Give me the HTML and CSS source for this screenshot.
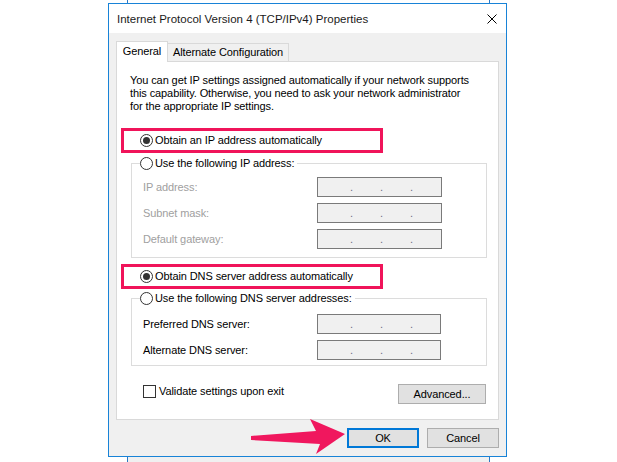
FILE: index.html
```html
<!DOCTYPE html>
<html>
<head>
<meta charset="utf-8">
<title>Internet Protocol Version 4 (TCP/IPv4) Properties</title>
<link rel="stylesheet" href="styles.css">
</head>
<body>
<div class="backwin"></div>
<div class="dialog">
  <div class="titlebar">
    <span class="title">Internet Protocol Version 4 (TCP/IPv4) Properties</span>
    <svg class="close" width="10" height="10" viewBox="0 0 10 10"><path d="M0.5 0.5L9.5 9.5M9.5 0.5L0.5 9.5" stroke="#000" stroke-width="1" fill="none"/></svg>
  </div>
  <div class="body">
    <div class="tabs">
      <div class="tab active">General</div>
      <div class="tab">Alternate Configuration</div>
    </div>
    <div class="panel">
      <p class="desc">You can get IP settings assigned automatically if your network supports<br>this capability. Otherwise, you need to ask your network administrator<br>for the appropriate IP settings.</p>
      <div class="highlight hl-first">
        <div class="radio-row"><span class="radio checked"></span><span class="rtext">Obtain an IP address automatically</span></div>
      </div>
      <fieldset class="group group-ip">
        <legend><span class="radio"></span><span class="rtext">Use the following IP address:</span></legend>
        <div class="fields">
          <span class="flabel disabled">IP address:</span>
          <span class="ipbox"><i>.</i><i>.</i><i>.</i></span>
          <span class="flabel disabled">Subnet mask:</span>
          <span class="ipbox"><i>.</i><i>.</i><i>.</i></span>
          <span class="flabel disabled">Default gateway:</span>
          <span class="ipbox"><i>.</i><i>.</i><i>.</i></span>
        </div>
      </fieldset>
      <div class="highlight hl-second">
        <div class="radio-row"><span class="radio checked"></span><span class="rtext">Obtain DNS server address automatically</span></div>
      </div>
      <fieldset class="group group-dns">
        <legend><span class="radio"></span><span class="rtext">Use the following DNS server addresses:</span></legend>
        <div class="fields">
          <span class="flabel">Preferred DNS server:</span>
          <span class="ipbox"><i>.</i><i>.</i><i>.</i></span>
          <span class="flabel">Alternate DNS server:</span>
          <span class="ipbox"><i>.</i><i>.</i><i>.</i></span>
        </div>
      </fieldset>
      <div class="bottom-row">
        <div class="check-row"><span class="checkbox"></span><span class="ctext">Validate settings upon exit</span></div>
        <div class="btn btn-adv">Advanced...</div>
      </div>
    </div>
    <div class="footer">
      <div class="btn btn-default">OK</div>
      <div class="btn">Cancel</div>
    </div>
  </div>
</div>
<svg class="arrow" width="617" height="462" viewBox="0 0 617 462">
  <polygon points="251,436 316,431 310,419 345,434 316,454 320,444 251,440" fill="#f0175e"/>
</svg>
</body>
</html>
```

FILE: styles.css
```css
* {
  box-sizing: border-box;
}

html,
body {
  margin: 0;
  padding: 0;
}

body {
  width: 617px;
  height: 462px;
  overflow: hidden;
  position: relative;
  background: #ffffff;
  font-family: "Liberation Sans", Arial, sans-serif;
  font-size: 11px;
  letter-spacing: -0.1px;
  line-height: 13px;
  color: #000000;
  white-space: nowrap;
}

.backwin {
  position: absolute;
  left: 127px;
  top: 0;
  width: 363px;
  height: 462px;
  border-left: 1px solid #2b78c5;
  border-right: 1px solid #2b78c5;
  background: linear-gradient(#ffffff 0 440px, #f0f0f0 440px);
}

.dialog {
  position: absolute;
  left: 108px;
  top: 3px;
  width: 399px;
  height: 454px;
  border: 1px solid #1883d7;
  background: #f0f0f0;
  display: flex;
  flex-direction: column;
}

.titlebar {
  flex: none;
  height: 29px;
  background: #ffffff;
  display: flex;
  align-items: center;
  justify-content: space-between;
  padding: 1px 9px 0 8px;
}

.title {
  font-size: 11.5px;
  letter-spacing: 0;
  color: #1a1a1a;
}

.close {
  display: block;
}

.body {
  padding: 8px 7px 0;
}

.tabs {
  display: flex;
  align-items: flex-end;
  height: 20px;
  position: relative;
  z-index: 1;
}

.tab {
  height: 18px;
  width: 121px;
  border: 1px solid #d9d9d9;
  border-left: none;
  border-bottom: none;
  background: #f0f0f0;
  text-align: center;
  line-height: 17px;
}

.tab.active {
  width: 52px;
  height: 21px;
  margin-bottom: -1px;
  border-left: 1px solid #d9d9d9;
  background: #ffffff;
  line-height: 19px;
}

.panel {
  height: 359px;
  background: #ffffff;
  border: 1px solid #d9d9d9;
  padding: 12px 11px 0 13px;
}

.desc {
  margin: 0;
  line-height: 13px;
}

.highlight {
  width: 262px;
  height: 25px;
  margin-left: -9px;
  border: 3px solid #f0145a;
}

.hl-first {
  margin-top: 15px;
}

.hl-second {
  margin-top: 6px;
}

.radio-row {
  height: 19px;
  display: flex;
  align-items: center;
  padding-left: 16px;
}

.radio {
  flex: none;
  width: 13px;
  height: 13px;
  border: 1px solid #333333;
  border-radius: 50%;
  background: #ffffff;
  display: flex;
  align-items: center;
  justify-content: center;
}

.radio.checked::after {
  content: "";
  width: 7px;
  height: 7px;
  border-radius: 50%;
  background: #333333;
}

.rtext {
  margin-left: 2px;
}

.group {
  margin: 4px 0 0 1px;
  padding: 7px 0 8px 8px;
  border: 1px solid #dcdcdc;
  min-width: 0;
}

.group-dns {
  margin-top: 3px;
  padding-top: 9px;
  padding-bottom: 5px;
}

.group legend {
  display: flex;
  align-items: center;
  height: 13px;
  padding: 0 3px 0 0;
}

.fields {
  display: grid;
  grid-template-columns: 174px 125px;
  row-gap: 6px;
  align-items: center;
  margin-left: 3px;
}

.group-dns .fields {
  grid-template-columns: 174px 124px;
}

.flabel.disabled {
  color: #a0a0a0;
}

.ipbox {
  height: 20px;
  border: 1px solid #7a7a7a;
  background: #f0f0f0;
  display: flex;
  align-items: center;
  padding-left: 32px;
  color: #6e6e86;
}

.ipbox i {
  font-style: normal;
  width: 30px;
}

.bottom-row {
  display: flex;
  align-items: flex-start;
  margin-top: 18px;
}

.check-row {
  display: flex;
  align-items: center;
  margin: 1px 0 0 13px;
}

.checkbox {
  width: 13px;
  height: 13px;
  border: 1px solid #333333;
  background: #ffffff;
}

.ctext {
  margin-left: 3px;
}

.btn {
  width: 72px;
  height: 20px;
  border: 1px solid #adadad;
  background: #e1e1e1;
  display: flex;
  align-items: center;
  justify-content: center;
}

.btn-adv {
  width: 88px;
  margin-left: auto;
  margin-right: 1px;
}

.btn-default {
  border: 2px solid #0078d7;
}

.footer {
  display: flex;
  justify-content: flex-end;
  gap: 8px;
  margin-top: 8px;
}

.arrow {
  position: absolute;
  left: 0;
  top: 0;
  pointer-events: none;
}
```
